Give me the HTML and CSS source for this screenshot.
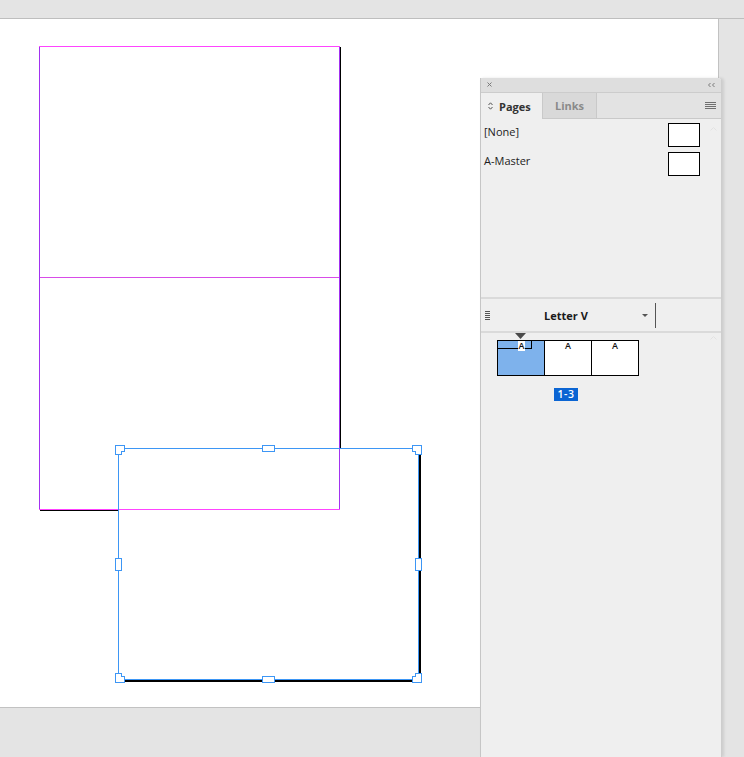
FILE: index.html
```html
<!DOCTYPE html>
<html>
<head>
<meta charset="utf-8">
<link rel="stylesheet" href="styles.css">
</head>
<body>
<div class="app">
  <div class="topbar"></div>
  <div class="pasteboard">
    <svg class="canvas" width="718" height="688" viewBox="0 19 718 688">
      <!-- page -->
      <rect x="340" y="47" width="1" height="401" fill="#000"/>
      <rect x="40" y="510" width="78" height="1" fill="#000"/>
      <rect x="39" y="46" width="1" height="464" fill="#a232f0"/>
      <rect x="339" y="46" width="1" height="464" fill="#a232f0"/>
      <rect x="39" y="46" width="301" height="1" fill="#ff44ff"/>
      <rect x="40" y="277" width="299" height="1" fill="#d84ce8"/>
      <rect x="39" y="509" width="301" height="1" fill="#ff44ff"/>
      <!-- selected frame -->
      <rect x="419" y="453" width="2" height="229" fill="#000"/>
      <rect x="123" y="680" width="298" height="2" fill="#000"/>
      <rect x="118.5" y="448.5" width="300" height="231" fill="none" stroke="#3d96f5" stroke-width="1"/>
      <g fill="#fff" stroke="#3d96f5" stroke-width="1">
        <path d="M115.5 445.5 H124.5 V451.5 H121.5 V454.5 H115.5 Z"/>
        <path d="M412.5 445.5 H421.5 V454.5 H415.5 V451.5 H412.5 Z"/>
        <path d="M115.5 673.5 H121.5 V676.5 H124.5 V682.5 H115.5 Z"/>
        <path d="M415.5 673.5 H421.5 V682.5 H412.5 V676.5 H415.5 Z"/>
        <rect x="262.5" y="445.5" width="12" height="6"/>
        <rect x="262.5" y="676.5" width="12" height="6"/>
        <rect x="115.5" y="558.5" width="6" height="12"/>
        <rect x="415.5" y="558.5" width="6" height="12"/>
      </g>
    </svg>
  </div>

  <div class="panel">
    <div class="titlebar">
      <svg class="close" width="5" height="5" viewBox="0 0 5 5"><path d="M0.5 0.5 L4.5 4.5 M4.5 0.5 L0.5 4.5" stroke="#7a7a7a" stroke-width="1" fill="none"/></svg>
      <svg class="collapse" width="7" height="4" viewBox="0 0 7 4"><path d="M2.5 0 L0.5 2 L2.5 4 M6.5 0 L4.5 2 L6.5 4" stroke="#7a7a7a" stroke-width="1" fill="none"/></svg>
    </div>
    <div class="tabs">
      <div class="tab active">
        <svg class="updown" width="5" height="8" viewBox="0 0 5 8"><path d="M0.5 3 L2.5 0.8 L4.5 3 M0.5 5 L2.5 7.2 L4.5 5" stroke="#555" stroke-width="1" fill="none"/></svg>
        <span>Pages</span>
      </div>
      <div class="tab">Links</div>
      <div class="tab-fill">
        <svg class="menu" width="11" height="7" viewBox="0 0 11 7"><path d="M0 0.5 H11 M0 2.5 H11 M0 4.5 H11 M0 6.5 H11" stroke="#707070" stroke-width="1"/></svg>
      </div>
    </div>
    <div class="masters">
      <div class="master-row"><span class="master-name">[None]</span><span class="master-thumb"></span></div>
      <div class="master-row"><span class="master-name">A-Master</span><span class="master-thumb"></span></div>
      <svg class="scroll-up" width="7" height="4" viewBox="0 0 7 4"><path d="M0.5 3.5 L3.5 0.5 L6.5 3.5" stroke="#e2e2e2" stroke-width="1" fill="none"/></svg>
    </div>
    <div class="divider"></div>
    <div class="sizebar">
      <svg class="size-icon" width="5" height="9" viewBox="0 0 5 9"><path d="M0 0.5 H5 M0 2.5 H5 M0 4.5 H5 M0 6.5 H5 M0 8.5 H5" stroke="#555" stroke-width="1"/></svg>
      <div class="select">
        <span class="select-label">Letter V</span>
        <svg class="caret" width="6" height="3" viewBox="0 0 6 3"><path d="M0 0 H6 L3 3 Z" fill="#555"/></svg>
      </div>
      <div class="vline"></div>
    </div>
    <div class="divider"></div>
    <div class="pages">
      <svg class="scroll-up2" width="7" height="4" viewBox="0 0 7 4"><path d="M0.5 3.5 L3.5 0.5 L6.5 3.5" stroke="#e2e2e2" stroke-width="1" fill="none"/></svg>
      <div class="marker-row">
        <svg class="marker" width="11" height="6" viewBox="0 0 11 6"><path d="M0 0 H11 L5.5 6 Z" fill="#4a4a4a"/></svg>
      </div>
      <div class="spread">
        <div class="page selected">
          <div class="tf"></div>
          <span class="page-label boxed">A</span>
        </div>
        <div class="page"><span class="page-label">A</span></div>
        <div class="page"><span class="page-label">A</span></div>
      </div>
      <div class="range"><span class="range-label">1-3</span></div>
    </div>
  </div>
</div>
</body>
</html>
```

FILE: styles.css
```css
* { box-sizing: border-box; }
html, body {
  margin: 0;
  padding: 0;
  background: #e4e4e4;
  overflow: hidden;
}
.app {
  position: relative;
  width: 744px;
  height: 757px;
  font-family: "Open Sans", "DejaVu Sans", sans-serif;
}
.topbar {
  height: 19px;
  border-bottom: 1px solid #bebebe;
}
.pasteboard {
  width: 719px;
  height: 689px;
  background: #fff;
  border-right: 1px solid #c2c2c2;
  border-bottom: 1px solid #c2c2c2;
}
.canvas {
  display: block;
  shape-rendering: crispEdges;
}

/* panel */
.panel {
  position: absolute;
  left: 480px;
  top: 78px;
  width: 242px;
  height: 679px;
  background: #efefef;
  border-left: 1px solid #c6c6c6;
  border-right: 1px solid #cdcdcd;
  border-top-right-radius: 3px;
  box-shadow: 2px 0 3px rgba(0,0,0,0.10);
  display: flex;
  flex-direction: column;
}
.titlebar {
  height: 15px;
  flex: none;
  background: #dedede;
  border-bottom: 1px solid #cccccc;
  border-top-right-radius: 3px;
  display: flex;
  align-items: center;
  justify-content: space-between;
  padding: 0 6px 1px 6px;
}
.close { display: block; }
.collapse { display: block; }
.tabs {
  height: 26px;
  flex: none;
  display: flex;
  background: #e3e3e3;
}
.tab {
  width: 54px;
  display: flex;
  align-items: center;
  justify-content: center;
  font-size: 11px;
  font-weight: 700;
  color: #8a8a8a;
  background: #d9d9d9;
  border-right: 1px solid #c9c9c9;
  border-bottom: 1px solid #c9c9c9;
}
.tab.active {
  width: 62px;
  background: #efefef;
  color: #333;
  border-bottom: none;
  justify-content: flex-start;
  padding-left: 7px;
  gap: 6px;
}
.updown { display: block; }
.tab-fill {
  flex: 1;
  border-bottom: 1px solid #c9c9c9;
  display: flex;
  align-items: center;
  justify-content: flex-end;
  padding-right: 5px;
}
.menu { display: block; }

.masters {
  position: relative;
  height: 178px;
  flex: none;
  padding: 4px 21px 0 3px;
}
.master-row {
  height: 29px;
  display: flex;
  justify-content: space-between;
  align-items: flex-start;
}
.master-name {
  font-size: 11px;
  line-height: 15px;
  padding-top: 1px;
  color: #1c1c1c;
}
.master-thumb {
  width: 32px;
  height: 24px;
  background: #fff;
  border: 1px solid #000;
}
.scroll-up {
  position: absolute;
  right: 4px;
  top: 8px;
}
.divider {
  height: 2px;
  flex: none;
  background: #dadada;
}
.sizebar {
  height: 32px;
  flex: none;
  display: flex;
  align-items: center;
  padding-left: 4px;
}
.size-icon { display: block; flex: none; }
.select {
  width: 162px;
  display: flex;
  align-items: center;
}
.select-label {
  flex: 1;
  text-align: center;
  font-size: 11px;
  font-weight: 700;
  color: #1a1a1a;
  line-height: 15px;
}
.caret { display: block; margin-right: 4px; }
.vline {
  width: 1px;
  height: 25px;
  margin-left: 3px;
  background: #555;
}

.pages {
  position: relative;
  flex: 1;
  padding-left: 16px;
}
.scroll-up2 {
  position: absolute;
  right: 4px;
  top: 3px;
}
.marker-row {
  height: 7px;
  padding-left: 18px;
}
.marker { display: block; }
.spread {
  width: 142px;
  height: 36px;
  border: 1px solid #000;
  display: flex;
  background: #fff;
}
.page {
  position: relative;
  width: 47px;
  border-right: 1px solid #000;
  display: flex;
  justify-content: center;
  align-items: flex-start;
}
.page:last-child {
  width: 46px;
  border-right: none;
}
.page.selected {
  background: #7eb2ec;
}
.tf {
  position: absolute;
  left: 0;
  top: 0;
  width: 34px;
  height: 8px;
  border-right: 1px solid #000;
  border-bottom: 1px solid #000;
}
.page-label {
  position: relative;
  font-size: 9px;
  font-weight: 600;
  line-height: 8px;
  color: #111;
  padding-top: 1px;
}
.page-label.boxed {
  background: #fff;
  padding: 1px 1px 1px 1px;
  margin-left: 1px;
}
.range {
  margin-top: 5px;
  padding-left: 57px;
}
.range-label {
  display: inline-block;
  width: 24px;
  height: 13px;
  background: #0b65d3;
  color: #fff;
  font-size: 10.5px;
  font-weight: 600;
  line-height: 13px;
  text-align: center;
  letter-spacing: 0.5px;
}
```
